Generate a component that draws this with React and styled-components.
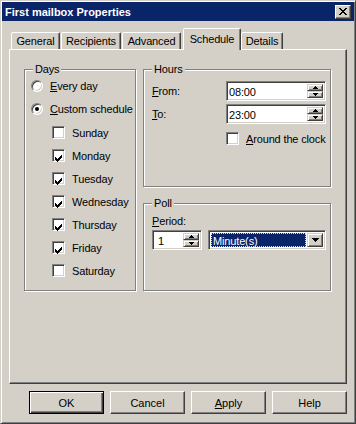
import React from 'react';
import styled, { createGlobalStyle, css } from 'styled-components';

const GlobalStyle = createGlobalStyle`
  * { box-sizing: border-box; }
  body {
    margin: 0;
    background: #d4d0c8;
    font-family: "Liberation Sans", Arial, sans-serif;
    font-size: 11px;
    letter-spacing: -0.15px;
    color: #000;
  }
`;

const sunken = css`
  border: 1px solid;
  border-color: #808080 #fff #fff #808080;
  box-shadow: inset 1px 1px 0 #404040, inset -1px -1px 0 #d4d0c8;
`;

const raised = css`
  border: 1px solid;
  border-color: #d4d0c8 #404040 #404040 #d4d0c8;
  box-shadow: inset 1px 1px 0 #fff, inset -1px -1px 0 #808080;
`;

const Window = styled.div`
  width: 356px;
  height: 424px;
  display: flex;
  flex-direction: column;
  padding: 1px;
  background: #d4d0c8;
  border: 1px solid;
  border-color: #d4d0c8 #404040 #404040 #d4d0c8;
  box-shadow: inset 1px 1px 0 #fff, inset -1px -1px 0 #808080;
`;

const TitleBar = styled.div`
  height: 19px;
  display: flex;
  align-items: center;
  justify-content: space-between;
  padding: 0 3px 0 3px;
  background: #0a246a;
  color: #fff;
  font-weight: bold;
  letter-spacing: 0;
`;

const CloseBtn = styled.div`
  width: 16px;
  height: 14px;
  display: flex;
  align-items: center;
  justify-content: center;
  background: #d4d0c8;
  border: 1px solid;
  border-color: #fff #404040 #404040 #fff;
  box-shadow: inset -1px -1px 0 #808080;
`;

const TabsRow = styled.div`
  position: relative;
  z-index: 1;
  height: 21px;
  margin-top: 7px;
  padding-left: 9px;
  display: flex;
  align-items: flex-end;
`;

const Tab = styled.div`
  width: ${p => p.$w}px;
  margin-left: ${p => p.$ml || 0}px;
  height: ${p => (p.$active ? 22 : 17)}px;
  margin-bottom: ${p => (p.$active ? -1 : 0)}px;
  padding-bottom: ${p => (p.$active ? 2 : 0)}px;
  display: flex;
  align-items: center;
  justify-content: center;
  background: #d4d0c8;
  border: 1px solid;
  border-bottom: none;
  border-color: #fff #404040 transparent #fff;
  border-radius: 2px 2px 0 0;
  box-shadow: inset -1px 0 0 #808080;
`;

const Panel = styled.div`
  height: 335px;
  margin: 0 7px;
  padding: 13px 0 0 14px;
  display: flex;
  gap: 7px;
  align-items: flex-start;
  border: 1px solid;
  border-color: #fff #404040 #404040 #fff;
  box-shadow: inset -1px -1px 0 #808080;
`;

const Column = styled.div`
  display: flex;
  flex-direction: column;
  gap: 10px;
`;

const Group = styled.fieldset`
  margin: 0;
  padding: 0;
  min-width: 0;
  width: ${p => p.$w}px;
  height: ${p => p.$h}px;
  border: 1px solid #808080;
  box-shadow: 1px 1px 0 #fff, inset 1px 1px 0 #fff;
`;

const Legend = styled.legend`
  margin-left: 8px;
  padding: 0 2px;
  line-height: 13px;
  background: #d4d0c8;
`;

const DayList = styled.div`
  margin-top: -2px;
  padding-left: 6px;
`;

const CheckList = styled.div`
  margin-top: 1px;
  padding-left: 21px;
`;

const Option = styled.div`
  height: 23px;
  display: flex;
  align-items: center;
  gap: 7px;
  white-space: nowrap;
`;

const Radio = styled.span`
  width: 12px;
  height: 12px;
  flex: none;
  display: flex;
  align-items: center;
  justify-content: center;
  border-radius: 50%;
  background: #fff;
  ${sunken};

  &::after {
    content: '';
    display: ${p => (p.$on ? 'block' : 'none')};
    width: 4px;
    height: 4px;
    border-radius: 50%;
    background: #000;
  }
`;

const CheckBox = styled.span`
  width: 13px;
  height: 13px;
  flex: none;
  padding: 2px 0 0 2px;
  background: #fff;
  ${sunken};
`;

const TimeGrid = styled.div`
  display: grid;
  grid-template-columns: 74px 100px;
  grid-auto-rows: 20px;
  row-gap: 3px;
  align-items: center;
  padding: 5px 0 0 8px;
`;

const ClockRow = styled.div`
  margin-top: 3px;
  padding-left: 82px;
`;

const PollBody = styled.div`
  padding: 5px 0 0 8px;
`;

const Label = styled.div`
  line-height: 13px;
`;

const PeriodRow = styled.div`
  margin-top: 2px;
  display: flex;
  gap: 6px;
`;

const EditBox = styled.div`
  width: ${p => p.$w}px;
  height: 20px;
  padding: 2px;
  display: flex;
  background: #fff;
  ${sunken};
`;

const EditText = styled.div`
  flex: 1;
  padding-left: ${p => p.$pl || 0}px;
  line-height: 16px;
`;

const Spin = styled.div`
  width: 16px;
  display: flex;
  flex-direction: column;
`;

const SpinBtn = styled.div`
  flex: 1;
  display: flex;
  align-items: center;
  justify-content: center;
  background: #d4d0c8;
  ${raised};
`;

const Combo = styled.div`
  width: 118px;
  height: 20px;
  padding: 2px;
  display: flex;
  gap: 1px;
  background: #fff;
  ${sunken};
`;

const Selected = styled.div`
  flex: 1;
  padding-left: 2px;
  line-height: 16px;
  color: #fff;
  background: #0a246a;
  outline: 1px dotted #f5db95;
  outline-offset: -1px;
`;

const DropBtn = styled.div`
  width: 16px;
  display: flex;
  align-items: center;
  justify-content: center;
  background: #d4d0c8;
  ${raised};
`;

const ButtonRow = styled.div`
  margin-top: 7px;
  padding-left: 27px;
  display: flex;
  gap: 6px;
`;

const Button = styled.button`
  width: 75px;
  height: 23px;
  padding: 0;
  font: inherit;
  color: #000;
  background: #d4d0c8;
  border: 1px solid;
  border-color: #fff #404040 #404040 #fff;
  box-shadow: inset -1px -1px 0 #808080;

  ${p =>
    p.$default &&
    css`
      border-color: #000;
      box-shadow: inset 1px 1px 0 #fff, inset -1px -1px 0 #404040, inset -2px -2px 0 #808080;
    `}
`;

const Pixel = ({ w, h, d }) => (
  <svg width={w} height={h} viewBox={`0 0 ${w} ${h}`} shapeRendering="crispEdges">
    <path d={d} fill="#000" />
  </svg>
);

const CLOSE_X =
  'M0 0h2v1H0zM6 0h2v1H6zM1 1h2v1H1zM5 1h2v1H5zM2 2h4v1H2zM3 3h2v1H3zM2 4h4v1H2zM1 5h2v1H1zM5 5h2v1H5zM0 6h2v1H0zM6 6h2v1H6z';
const CHECK =
  'M6 0h1v1H6zM5 1h2v1H5zM0 2h1v1H0zM4 2h3v1H4zM0 3h2v1H0zM3 3h3v1H3zM0 4h5v1H0zM1 5h3v1H1zM2 6h1v1H2z';
const UP = 'M2 0h1v1h1v1h1v1H0V2h1V1h1z';
const DOWN = 'M0 0h5v1H4v1H3v1H2V2H1V1H0z';
const DROP = 'M0 0h7v1H6v1H5v1H4v1H3V3H2V2H1V1H0z';

const Check = ({ on }) => <CheckBox>{on && <Pixel w={7} h={7} d={CHECK} />}</CheckBox>;

const SpinEdit = ({ w, value, pl }) => (
  <EditBox $w={w}>
    <EditText $pl={pl}>{value}</EditText>
    <Spin>
      <SpinBtn>
        <Pixel w={5} h={3} d={UP} />
      </SpinBtn>
      <SpinBtn>
        <Pixel w={5} h={3} d={DOWN} />
      </SpinBtn>
    </Spin>
  </EditBox>
);

const days = [
  { name: 'Sunday', on: false },
  { name: 'Monday', on: true },
  { name: 'Tuesday', on: true },
  { name: 'Wednesday', on: true },
  { name: 'Thursday', on: true },
  { name: 'Friday', on: true },
  { name: 'Saturday', on: false },
];

const tabs = [
  { name: 'General', w: 49, ml: 0 },
  { name: 'Recipients', w: 60, ml: 1 },
  { name: 'Advanced', w: 59, ml: 1 },
  { name: 'Schedule', w: 58, ml: 2, active: true },
  { name: 'Details', w: 42, ml: 0 },
];

const App = () => (
  <>
    <GlobalStyle />
    <Window>
      <TitleBar>
        <span>First mailbox Properties</span>
        <CloseBtn>
          <Pixel w={8} h={7} d={CLOSE_X} />
        </CloseBtn>
      </TitleBar>

      <TabsRow>
        {tabs.map(t => (
          <Tab key={t.name} $w={t.w} $ml={t.ml} $active={t.active}>
            {t.name}
          </Tab>
        ))}
      </TabsRow>

      <Panel>
        <Group $w={112} $h={228}>
          <Legend>Days</Legend>
          <DayList>
            <Option>
              <Radio />
              <span>
                <u>E</u>very day
              </span>
            </Option>
            <Option>
              <Radio $on />
              <span>
                <u>C</u>ustom schedule
              </span>
            </Option>
            <CheckList>
              {days.map(d => (
                <Option key={d.name}>
                  <Check on={d.on} />
                  <span>{d.name}</span>
                </Option>
              ))}
            </CheckList>
          </DayList>
        </Group>

        <Column>
          <Group $w={188} $h={124}>
            <Legend>Hours</Legend>
            <TimeGrid>
              <Label>
                <u>F</u>rom:
              </Label>
              <SpinEdit w={100} value="08:00" />
              <Label>
                <u>T</u>o:
              </Label>
              <SpinEdit w={100} value="23:00" />
            </TimeGrid>
            <ClockRow>
              <Option>
                <Check />
                <span>
                  <u>A</u>round the clock
                </span>
              </Option>
            </ClockRow>
          </Group>

          <Group $w={188} $h={94}>
            <Legend>Poll</Legend>
            <PollBody>
              <Label>
                <u>P</u>eriod:
              </Label>
              <PeriodRow>
                <SpinEdit w={50} value="1" pl={3} />
                <Combo>
                  <Selected>Minute(s)</Selected>
                  <DropBtn>
                    <Pixel w={7} h={4} d={DROP} />
                  </DropBtn>
                </Combo>
              </PeriodRow>
            </PollBody>
          </Group>
        </Column>
      </Panel>

      <ButtonRow>
        <Button $default>OK</Button>
        <Button>Cancel</Button>
        <Button>
          <u>A</u>pply
        </Button>
        <Button>Help</Button>
      </ButtonRow>
    </Window>
  </>
);

export default App;
